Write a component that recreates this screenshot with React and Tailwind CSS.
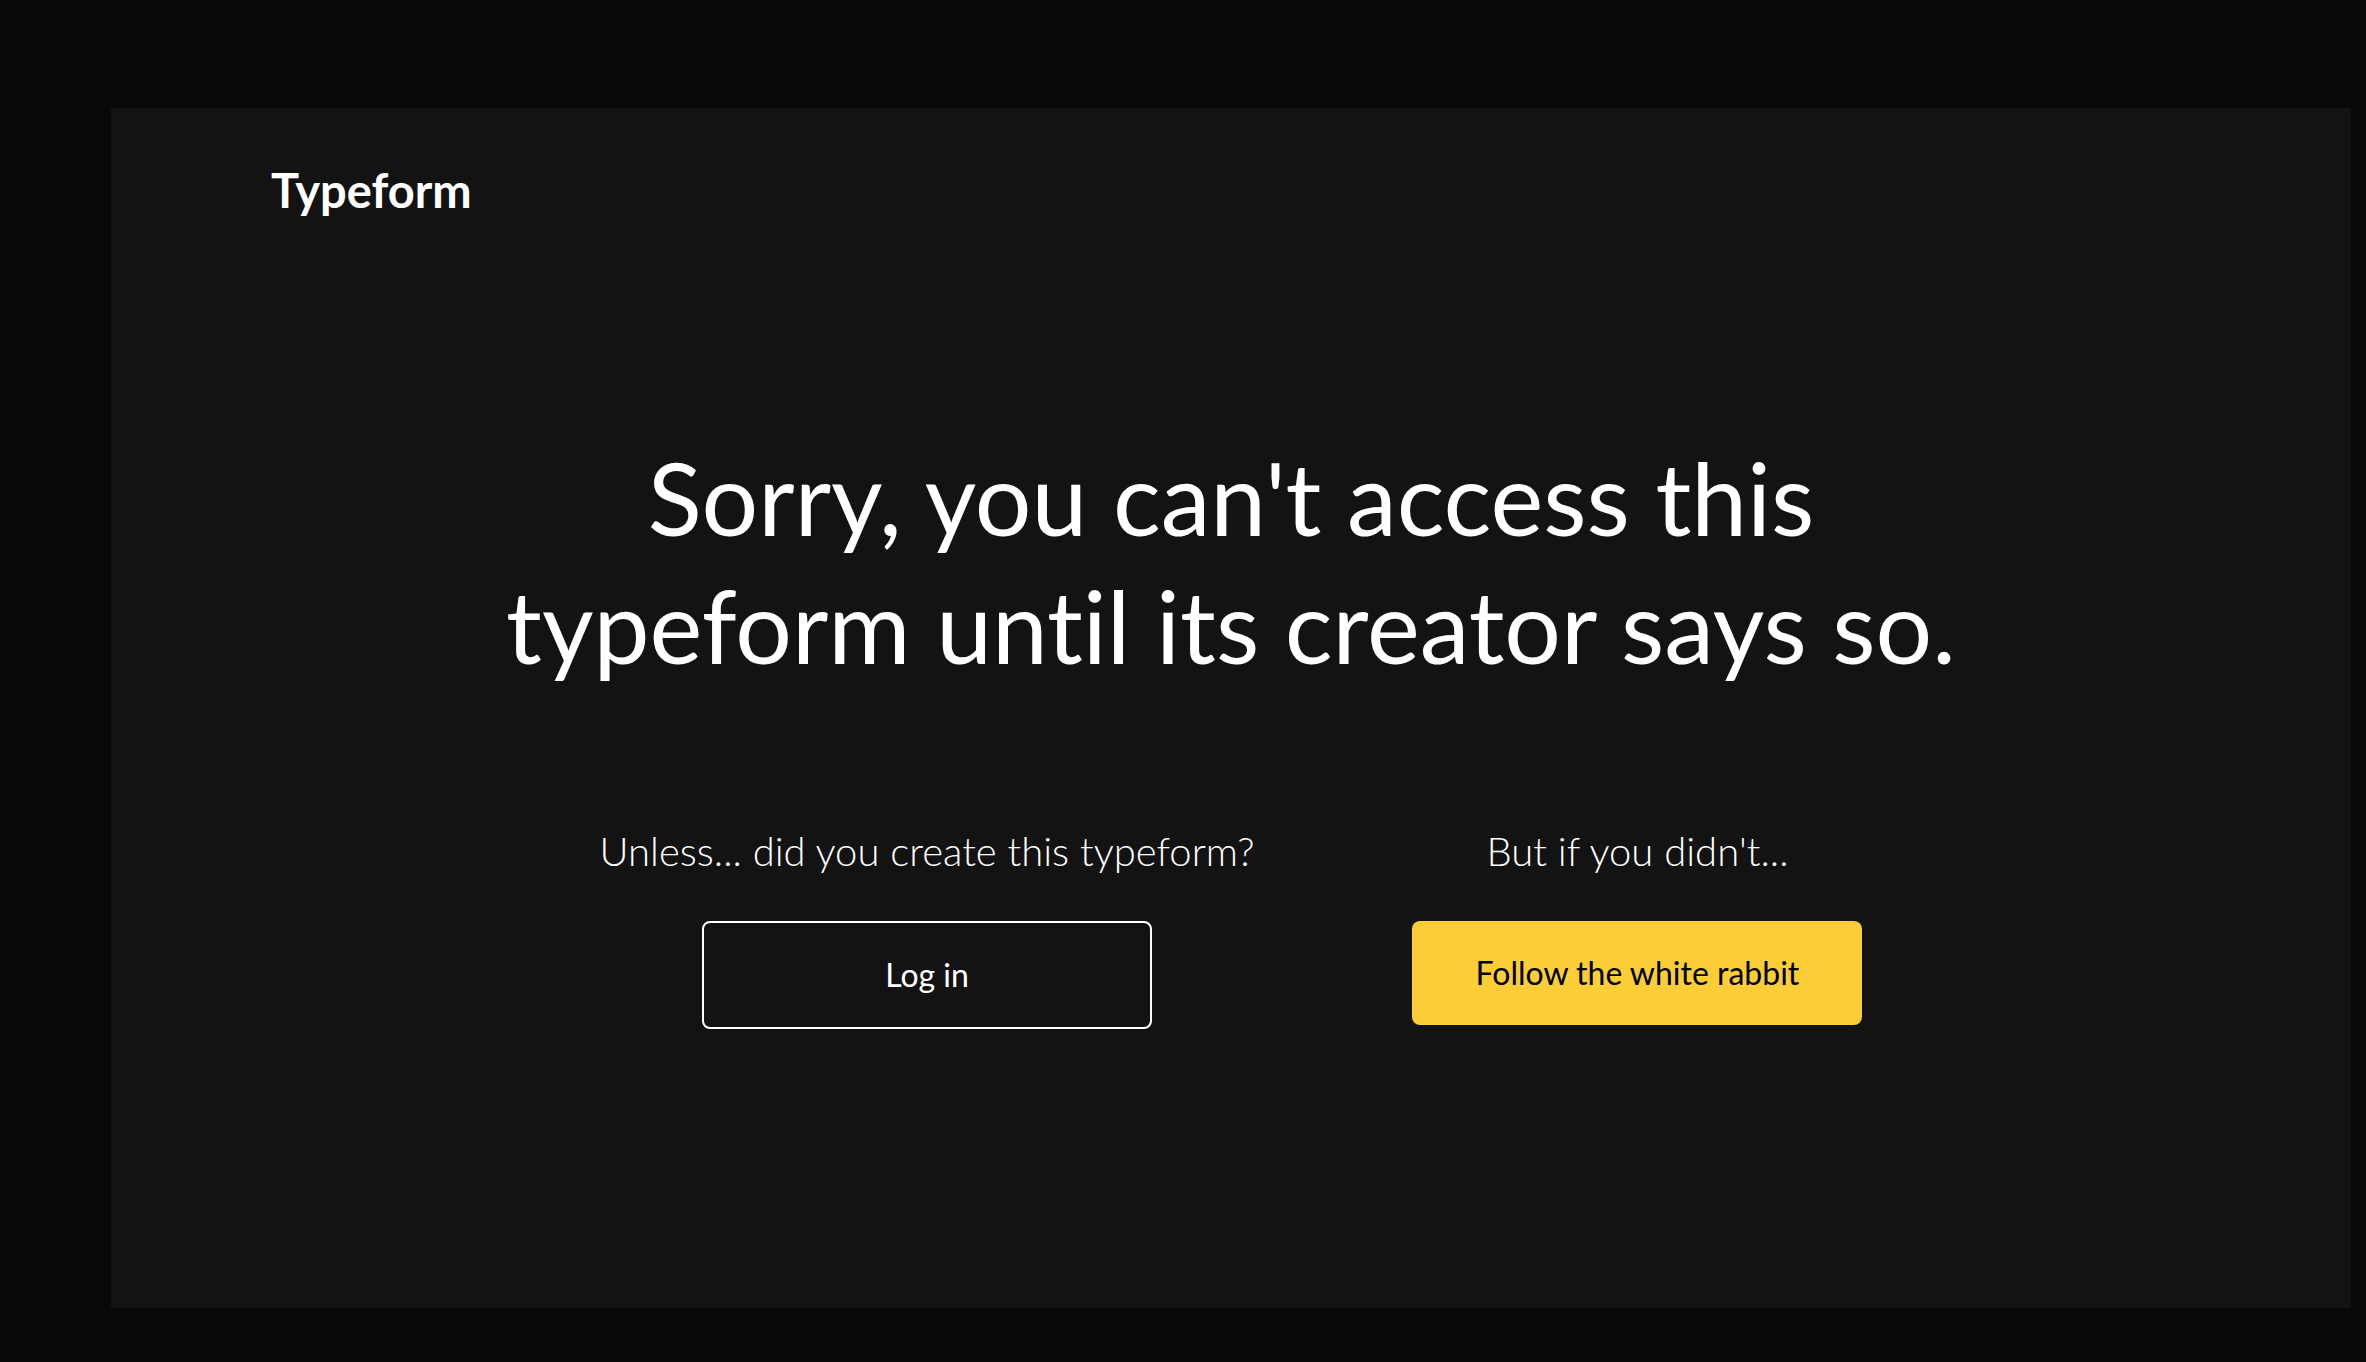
function Choice({ label, children }) {
  return (
    <div className="flex flex-col items-center">
      <p className="mb-10 text-[40px] leading-[60px] font-light whitespace-nowrap">{label}</p>
      {children}
    </div>
  );
}

export default function App() {
  return (
    <div className="flex min-h-screen bg-[#080808] pt-[108px] pr-[15px] pb-[54px] pl-[111px] font-['Lato',sans-serif] text-white [font-variant-ligatures:none]">
      <div className="flex flex-1 flex-col bg-[#131313]">
        <header className="px-40 pt-[54px]">
          <a href="/" className="inline-block text-[47px] leading-[56px] font-bold">
            Typeform
          </a>
        </header>

        <main className="flex flex-col items-center pt-[215px]">
          <h1 className="text-center text-[100px] leading-[128px]">
            Sorry, you can't access this
            <br />
            typeform until its creator says so.
          </h1>

          <div className="mt-[132px] flex items-start justify-center gap-[158px]">
            <Choice label="Unless... did you create this typeform?">
              <button
                type="button"
                className="w-[450px] rounded-lg border-2 border-white py-8 text-[32px] leading-[40px] transition-colors hover:bg-white/10"
              >
                Log in
              </button>
            </Choice>
            <Choice label="But if you didn't...">
              <button
                type="button"
                className="w-[450px] rounded-lg bg-[#fbce37] py-8 text-[32px] leading-[40px] text-black transition-colors hover:bg-[#e8bd2c]"
              >
                Follow the white rabbit
              </button>
            </Choice>
          </div>
        </main>
      </div>
    </div>
  );
}
